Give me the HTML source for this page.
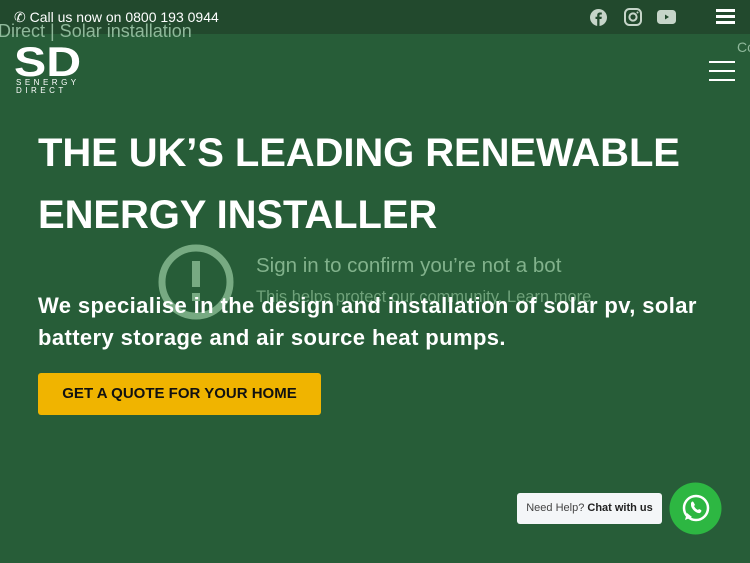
<!DOCTYPE html>
<html><head><style>
body{margin:0;width:750px;height:563px;overflow:hidden;background:#275d38;font-family:"Liberation Sans",sans-serif;position:relative}
.top{position:absolute;left:0;top:0;width:750px;height:34px;background:#22492d}
.abs{position:absolute}
h1{position:absolute;left:38px;top:122px;margin:0;color:#fff;font-size:40px;line-height:62px;font-weight:bold;letter-spacing:-0.1px}
.sub{position:absolute;left:38px;top:290px;color:#fff;font-size:22px;line-height:32px;font-weight:bold;letter-spacing:0.4px}
.btn{position:absolute;left:38px;top:373px;width:283px;height:42px;background:#f0b400;border-radius:3px;color:#111;font-weight:bold;font-size:15px;line-height:42px;text-align:center}
.bar{position:absolute;height:3px;background:#fff}
</style></head><body>
<div class="top"></div>
<div class="abs" style="left:14px;top:9px;color:#fff;font-size:14px">✆ Call us now on 0800 193 0944</div>
<div class="abs" style="left:-2px;top:21px;color:#8fb89a;font-size:18px">Direct | Solar installation</div>
<div class="abs" style="left:737px;top:39px;color:#8fb89a;font-size:14px">Co</div>
<svg class="abs" style="left:590px;top:9px" width="17" height="17"><circle cx="8.5" cy="8.5" r="8.5" fill="#c6d5c9"/><path d="M9.5 17V10h2l.3-2.3H9.5V6.5c0-.6.2-1 1-1h1.3V3.5H10c-2 0-2.8 1.2-2.8 2.9v1.3H5.5V10h1.7v7z" fill="#22492d"/></svg>
<svg class="abs" style="left:624px;top:8px" width="18" height="18"><rect x="1" y="1" width="16" height="16" rx="4.5" fill="none" stroke="#c6d5c9" stroke-width="2"/><circle cx="9" cy="9" r="3.6" fill="none" stroke="#c6d5c9" stroke-width="2"/><circle cx="13.5" cy="4.5" r="1" fill="#c6d5c9"/></svg>
<svg class="abs" style="left:657px;top:10px" width="19" height="14"><rect width="19" height="14" rx="3.5" fill="#c6d5c9"/><path d="M8 4.5v5l4-2.5z" fill="#22492d"/></svg>
<div class="bar" style="left:716px;top:9px;width:19px"></div><div class="bar" style="left:716px;top:15px;width:19px"></div><div class="bar" style="left:716px;top:21px;width:19px"></div>
<div class="bar" style="left:709px;top:61px;width:26px;height:2px"></div><div class="bar" style="left:709px;top:70px;width:26px;height:2px"></div><div class="bar" style="left:709px;top:79px;width:26px;height:2px"></div>
<div class="abs" style="left:14px;top:44px;color:#fff;font-size:42px;font-weight:bold;line-height:36px;transform:scaleX(1.15);transform-origin:left">SD</div>
<div class="abs" style="left:16px;top:79px;color:#fff;font-size:8px;line-height:8px;letter-spacing:3.5px">SENERGY<br>DIRECT</div>
<svg class="abs" style="left:157px;top:243px" width="78" height="78"><circle cx="39" cy="39" r="34" fill="none" stroke="#77aa82" stroke-width="7"/><rect x="35" y="18" width="8" height="26" fill="#77aa82"/><rect x="35" y="50" width="8" height="8" fill="#77aa82"/></svg>
<div class="abs" style="left:256px;top:254px;color:#82b28c;font-size:20.5px">Sign in to confirm you’re not a bot</div>
<div class="abs" style="left:256px;top:288px;color:#6fa27a;font-size:16.5px">This helps protect our community. Learn more</div>
<h1>THE UK’S LEADING RENEWABLE<br>ENERGY INSTALLER</h1>
<div class="sub">We specialise in the design and installation of solar pv, solar<br>battery storage and air source heat pumps.</div>
<div class="btn">GET A QUOTE FOR YOUR HOME</div>
<div class="abs" style="left:517px;top:493px;width:145px;height:31px;background:#f4f6f8;border-radius:3px;font-size:11px;line-height:31px;text-align:center;color:#444">Need Help? <b style="color:#222">Chat with us</b></div>
<svg class="abs" style="left:669px;top:482px" width="53" height="53"><circle cx="26.5" cy="26.5" r="26" fill="#2db742"/><circle cx="27" cy="26" r="12" fill="none" stroke="#fff" stroke-width="2.5"/><path d="M16 38l2-7 5 4z" fill="#fff"/><path d="M22 21c1-2 2-2 3 0l1 2-1 1c1 2 2 3 4 4l1-1 2 1c1 1 0 2-1 3-3 1-9-4-9-8z" fill="#fff"/></svg>
</body></html>
